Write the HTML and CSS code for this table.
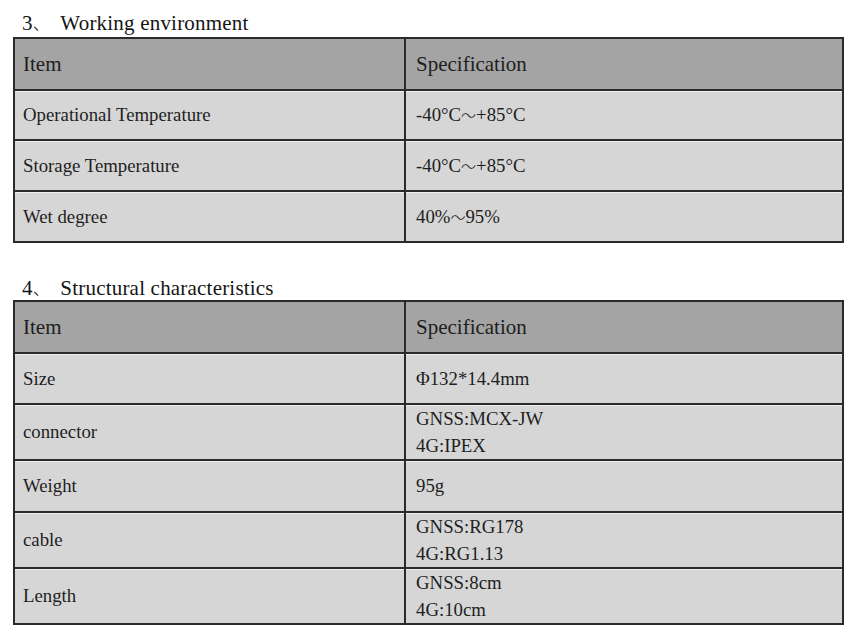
FILE: index.html
```html
<!DOCTYPE html>
<html>
<head>
<meta charset="utf-8">
<link rel="stylesheet" href="styles.css">
</head>
<body>
<div class="page">
  <h2 class="title t1">3<span class="cjk">、</span> Working environment</h2>
  <table class="spec t-env">
    <tr class="head"><td class="c1">Item</td><td class="c2">Specification</td></tr>
    <tr class="r50"><td class="c1">Operational Temperature</td><td class="c2">-40°C<span class="cjk">～</span>+85°C</td></tr>
    <tr class="r51"><td class="c1">Storage Temperature</td><td class="c2">-40°C<span class="cjk">～</span>+85°C</td></tr>
    <tr class="r51"><td class="c1">Wet degree</td><td class="c2">40%<span class="cjk">～</span>95%</td></tr>
  </table>
  <h2 class="title t2">4<span class="cjk">、</span> Structural characteristics</h2>
  <table class="spec t-struct">
    <tr class="head"><td class="c1">Item</td><td class="c2">Specification</td></tr>
    <tr class="r51"><td class="c1">Size</td><td class="c2">Φ132*14.4mm</td></tr>
    <tr class="r56"><td class="c1">connector</td><td class="c2"><div class="ln">GNSS:MCX-JW</div><div class="ln">4G:IPEX</div></td></tr>
    <tr class="r52"><td class="c1">Weight</td><td class="c2">95g</td></tr>
    <tr class="r56"><td class="c1">cable</td><td class="c2"><div class="ln">GNSS:RG178</div><div class="ln">4G:RG1.13</div></td></tr>
    <tr class="r56"><td class="c1">Length</td><td class="c2"><div class="ln">GNSS:8cm</div><div class="ln">4G:10cm</div></td></tr>
  </table>
</div>
</body>
</html>
```
FILE: styles.css
```css
html, body {
  margin: 0;
  padding: 0;
  background: #ffffff;
}
body {
  font-family: "Liberation Serif", "Times New Roman", serif;
  color: #1e1e1e;
}
.cjk {
  font-family: "Noto Sans CJK SC", sans-serif;
  font-weight: 300;
}
.page {
  padding: 0 15px 0 13px;
  width: 831px;
}
.title {
  font-weight: normal;
  font-size: 21px;
  margin: 0;
  padding-left: 9px;
  line-height: 24px;
  letter-spacing: 0.2px;
  color: #151515;
}
.title .cjk {
  font-size: 17px;
  margin-right: 5px;
}
.t1 {
  padding-top: 11px;
  height: 26px;
  box-sizing: content-box;
}
.t2 {
  margin-top: 33px;
  height: 24px;
}
.spec {
  border-collapse: collapse;
  width: 831px;
  table-layout: fixed;
  border: 2px solid #2a2a2a;
}
.spec td {
  border: 2px solid #2a2a2a;
  background: #d6d6d6;
  padding: 0 0 0 8px;
  font-size: 18.8px;
  vertical-align: middle;
  box-shadow: inset 0 1px 0 #f0f0f0;
}
.spec td.c2 {
  padding-left: 10px;
}
.spec .cjk {
  font-size: 15px;
}
.spec .head td {
  background: #a4a4a4;
  font-size: 21px;
  height: 50px;
  box-shadow: none;
}
.spec .c1 {
  width: 381px;
}
.r50 td { height: 48px; }
.r51 td { height: 49px; }
.r52 td { height: 50px; }
.r56 td { height: 54px; }
.ln {
  line-height: 27px;
}
```
